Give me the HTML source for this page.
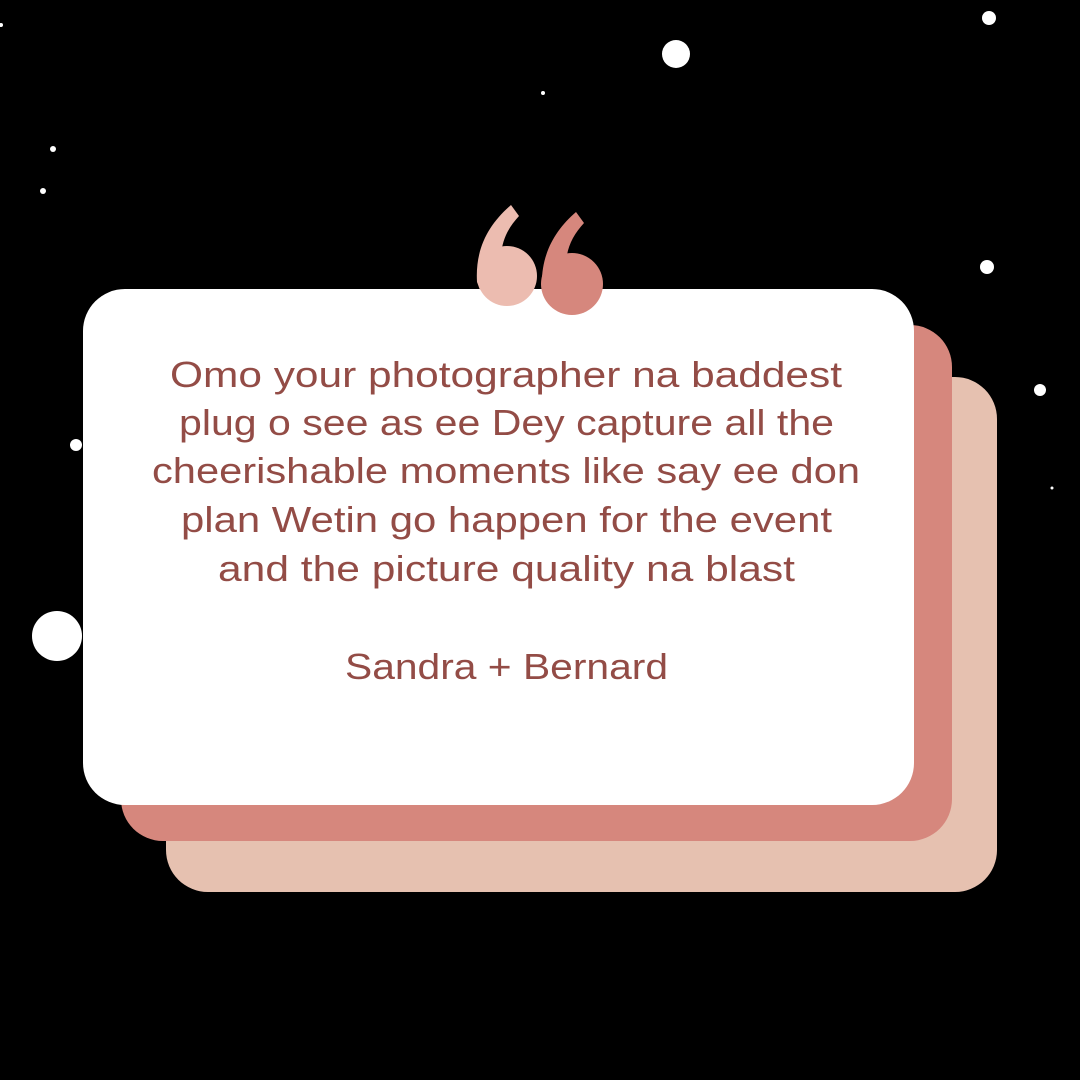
<!DOCTYPE html>
<html><head><meta charset="utf-8"><style>
html,body{margin:0;padding:0;background:#000;width:1080px;height:1080px;overflow:hidden}
</style></head><body>
<svg width="1080" height="1080" viewBox="0 0 1080 1080" xmlns="http://www.w3.org/2000/svg">
<rect width="1080" height="1080" fill="#000"/>
<g fill="#fff">
<circle cx="676" cy="54" r="14"/><circle cx="989" cy="18" r="7"/><circle cx="543" cy="93" r="2"/>
<circle cx="53" cy="149" r="3"/><circle cx="43" cy="191" r="3"/><circle cx="987" cy="267" r="7"/>
<circle cx="1040" cy="390" r="6"/><circle cx="76" cy="445" r="6"/><circle cx="1052" cy="488" r="1.5"/>
<circle cx="57" cy="636" r="25"/><circle cx="1" cy="25" r="2"/>
</g>
<rect x="166" y="377" width="831" height="515" rx="42" fill="#e6c1b0"/>
<rect x="121" y="325" width="831" height="516" rx="42" fill="#d6877d"/>
<rect x="83" y="289" width="831" height="516" rx="42" fill="#fff"/>
<g fill="#ecbcb0">
<circle cx="507" cy="276" r="30"/>
<path d="M477 282 C475 248 489 224 511 205 L519 216 C508 228 502 240 501 256 L480 290 Z"/>
</g>
<g fill="#d6877d">
<circle cx="572" cy="284" r="31"/>
<path d="M542 290 C540 256 554 231 576 212 L584 223 C573 235 567 247 566 263 L545 298 Z"/>
</g>
<g fill="#934c46" font-family="Liberation Sans, sans-serif" font-size="36">
<text x="170" y="387" textLength="672" lengthAdjust="spacingAndGlyphs">Omo your photographer na baddest</text>
<text x="179" y="435" textLength="655" lengthAdjust="spacingAndGlyphs">plug o see as ee Dey capture all the</text>
<text x="152" y="483" textLength="708" lengthAdjust="spacingAndGlyphs">cheerishable moments like say ee don</text>
<text x="181" y="532" textLength="651" lengthAdjust="spacingAndGlyphs">plan Wetin go happen for the event</text>
<text x="218" y="581" textLength="577" lengthAdjust="spacingAndGlyphs">and the picture quality na blast</text>
<text x="345" y="679" textLength="323" lengthAdjust="spacingAndGlyphs">Sandra + Bernard</text>
</g>
</svg>
</body></html>
